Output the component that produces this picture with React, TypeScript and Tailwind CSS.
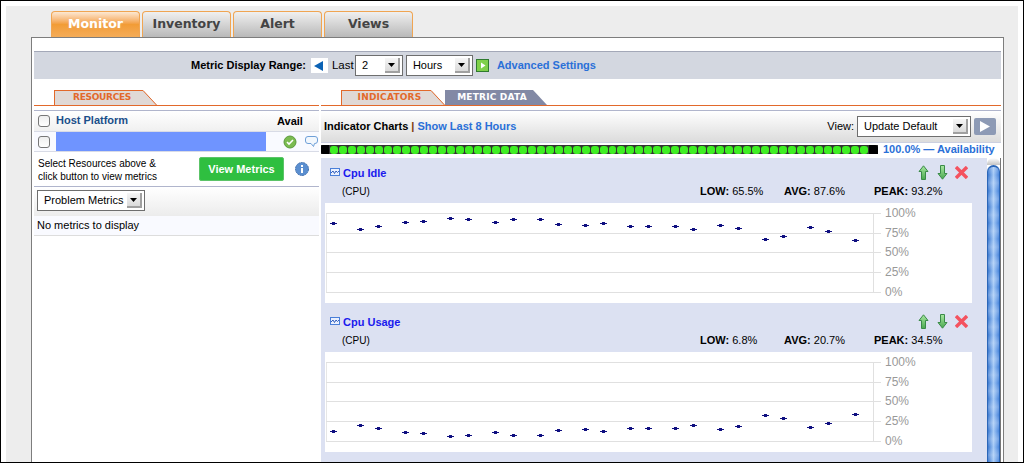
import React from "react";

const xs = [333,360,378,405,423,450,468,495,513,540,558,585,603,630,648,675,693,720,738,765,783,810,828,855];
const idle = [223,229,226,222,221,218,219,222,219,219,224,225,223,226,226,226,229,225,228,239,236,227,231,240];
const usage = [431,425,428,432,433,436,435,432,435,435,430,429,431,428,428,428,425,429,426,415,418,427,423,414];

function Arrow() {
  return (
    <span className="flex h-full w-[15px] shrink-0 items-center justify-center border-r-2 border-b-2 border-[#a0a0a0] bg-gradient-to-b from-[#f6f6f6] to-[#dadada]">
      <svg width="7" height="4" viewBox="0 0 7 4"><path d="M0 0h7L3.5 4z" fill="#000" /></svg>
    </span>
  );
}

function Select({ label, w }: { label: string; w: string }) {
  return (
    <div className={`flex ${w} h-[21px] items-center justify-between border border-[#6e6e6e] bg-white py-[2px] pr-[2px] pl-[6px] text-[11px] whitespace-nowrap text-black`}>
      <span>{label}</span>
      <Arrow />
    </div>
  );
}

function Check() {
  return <span className="block h-[12px] w-[12px] shrink-0 rounded-[3px] border border-[#777] bg-gradient-to-b from-[#eeeeee] to-[#ffffff]" />;
}

function TopTab({ label, active = false }: { label: string; active?: boolean }) {
  return (
    <div
      className={`flex h-[26px] w-[89px] items-center justify-center rounded-t-[4px] border border-b-0 border-[#f0a552] font-["DejaVu_Sans"] text-[12.5px] font-bold ${
        active
          ? "bg-gradient-to-b from-[#fce8d2] via-[#f29c36] to-[#f4ac58] text-white [text-shadow:0_0_2px_#f3b878]"
          : "bg-gradient-to-b from-[#f0f0f0] to-[#b9b9b9] text-[#444]"
      }`}
    >
      {label}
    </div>
  );
}

function SubTab({ label, w, track, dark = false }: { label: string; w: string; track: string; dark?: boolean }) {
  return (
    <div className={`flex h-[15px] ${w} items-center`}>
      <div
        className={`flex h-full flex-1 items-center justify-center pl-[6px] font-["DejaVu_Sans"] text-[9px] font-bold ${track} ${
          dark ? "bg-[#8289a5] text-white" : "border-t border-l border-[#e2692b] bg-[#e0d9d6] text-[#e2692b]"
        }`}
      >
        {label}
      </div>
      <svg width="14" height="15" viewBox="0 0 14 15" className="block shrink-0">
        <path d="M0 0L14 15H0z" fill={dark ? "#8289a5" : "#e0d9d6"} />
        {!dark && <path d="M0 .5L13.5 15" stroke="#e2692b" fill="none" />}
      </svg>
    </div>
  );
}

function ChartIcon() {
  return (
    <svg width="10" height="8" viewBox="0 0 10 8" className="shrink-0">
      <rect x=".5" y=".5" width="9" height="7" fill="#eaf0fe" stroke="#4a7fd8" />
      <path d="M1 5l2-2 1.5 2.5L6 3l1.5 1.5L9 3" stroke="#1f4fb5" fill="none" strokeWidth=".9" />
    </svg>
  );
}

function Controls() {
  return (
    <div className="flex items-center gap-[6px]">
      <svg width="13" height="15" viewBox="0 0 13 15">
        <defs>
          <linearGradient id="ga" x1="0" y1="0" x2="0" y2="1">
            <stop offset="0" stopColor="#a8e8a0" />
            <stop offset="1" stopColor="#4aa850" />
          </linearGradient>
        </defs>
        <path d="M6.5 .8L11 6.5H8.5v8h-4v-8H2z" fill="url(#ga)" stroke="#3a8a48" />
      </svg>
      <svg width="13" height="15" viewBox="0 0 13 15">
        <path d="M6.5 14.2L11 8.5H8.5v-8h-4v8H2z" fill="url(#ga)" stroke="#3a8a48" />
      </svg>
      <svg width="13" height="13" viewBox="0 0 13 13">
        <path d="M2.2 2.2l8.6 8.6M10.8 2.2l-8.6 8.6" stroke="#f4525f" strokeWidth="3.4" strokeLinecap="square" />
      </svg>
    </div>
  );
}

function Stat({ name, value, w }: { name: string; value: string; w: string }) {
  return (
    <span className={`${w} text-black`}>
      <b>{name}:</b> {value}
    </span>
  );
}

function Chart({ ys, top }: { ys: number[]; top: number }) {
  const lines = [10, 30, 49, 69, 89];
  const labels = ["100%", "75%", "50%", "25%", "0%"];
  return (
    <div className="mx-[4px] h-[100px] w-[647px] bg-white">
      <svg width="647" height="100" viewBox="0 0 647 100" className="block">
        <path d="M1.5 10V89" stroke="#e6e6e6" />
        <path d="M548.5 10V89" stroke="#e0e0e0" />
        {lines.map((y, i) => (
          <g key={y}>
            <path d={`M1 ${y + 0.5}H556`} stroke="#e0e0e0" />
            <text x="560" y={y + 4} fontSize="12" fill="#999" fontFamily="Liberation Sans">
              {labels[i]}
            </text>
          </g>
        ))}
        {xs.map((x, i) => (
          <g key={x} fill="#0f0f80">
            <rect x={x - 325 - 3} y={ys[i] - top} width="7" height="1" />
            <rect x={x - 325 - 1} y={ys[i] - top - 1} width="3" height="3" />
          </g>
        ))}
      </svg>
    </div>
  );
}

function Card({
  title, low, avg, peak, ys, top, h,
}: { title: string; low: string; avg: string; peak: string; ys: number[]; top: number; h: string }) {
  return (
    <div>
      <div className={`${h} flex flex-col justify-end pr-[19px] pb-[4px] pl-[9px]`}>
        <div className="flex items-center justify-between">
          <div className="flex items-center gap-[3px] text-[11px] font-bold text-[#1a1aee]">
            <ChartIcon />
            <span className="pt-[2px]">{title}</span>
          </div>
          <Controls />
        </div>
        <div className="mt-[1px] flex items-center text-[11px]">
          <span className="ml-[12px] w-[358px] pt-[1px] text-[10px] text-black">(CPU)</span>
          <Stat name="LOW" value={low} w="w-[84px]" />
          <Stat name="AVG" value={avg} w="w-[90px]" />
          <Stat name="PEAK" value={peak} w="w-[70px]" />
        </div>
      </div>
      <Chart ys={ys} top={top} />
    </div>
  );
}

export default function App() {
  return (
    <div className='h-[463px] w-[1024px] overflow-hidden border border-black bg-white px-[5px] pt-[5px] font-["Liberation_Sans",sans-serif]'>
      <div className="h-[456px] w-[1012px] overflow-hidden bg-[#ededed] pt-[5px] pl-[25px]">
        <div className="flex gap-[2px] pl-[20px]">
          <TopTab label="Monitor" active />
          <TopTab label="Inventory" />
          <TopTab label="Alert" />
          <TopTab label="Views" />
        </div>
        <div className="h-[430px] w-[973px] border border-[#7d7d7d] bg-white px-[2px] pt-[13px]">
          <div className="flex h-[28px] items-center border-t border-[#a3a8b8] bg-[#d3d7e0] pl-[157px] text-[11px] text-black">
            <b>Metric Display Range:</b>
            <span className="ml-[5px] flex h-[15px] w-[17px] items-center justify-center bg-white">
              <svg width="10" height="10" viewBox="0 0 10 10"><path d="M0 5L9 0v10z" fill="#0b62b5" /></svg>
            </span>
            <span className="ml-[4px] w-[23px] text-[11.5px]">Last</span>
            <span className="w-[48px]"><Select label="2" w="w-[48px]" /></span>
            <span className="ml-[3px]"><Select label="Hours" w="w-[67px]" /></span>
            <span className="ml-[3px]">
              <svg width="13" height="13" viewBox="0 0 13 13" className="block">
                <rect x=".5" y=".5" width="12" height="12" fill="#7fd04a" stroke="#2f7a2f" />
                <path d="M5 3.5L9.5 6.5 5 9.5z" fill="#fff" />
              </svg>
            </span>
            <b className="ml-[8px] text-[#2a70d8]">Advanced Settings</b>
          </div>
          <div className="flex gap-[2px] pt-[12px]">
            <div className="w-[285px]">
              <div className="flex h-[15px] items-end border-b border-[#e2692b] pl-[20px]">
                <SubTab label="RESOURCES" w="w-[103px]" track="tracking-[-0.3px]" />
              </div>
              <div className="mt-[4px] border-t border-[#b0b5cc]">
                <div className="flex h-[20px] items-center bg-gradient-to-b from-[#fff] to-[#f0f0f0] pl-[4px] text-[11px]">
                  <Check />
                  <b className="ml-[6px] w-[221px] pb-[2px] text-[#1a4f8a]">Host Platform</b>
                  <b className="text-black">Avail</b>
                </div>
                <div className="flex h-[21px] items-center border-y border-[#d8dbe6] bg-[#f9faff] pl-[4px]">
                  <Check />
                  <span className="ml-[6px] h-[19px] w-[210px] bg-[#6f94ff]" />
                  <svg width="14" height="14" viewBox="0 0 14 14" className="ml-[17px]">
                    <circle cx="7" cy="7" r="6" fill="#7bbb50" stroke="#5a9a3c" />
                    <path d="M4 7l2 2 4-4" stroke="#fff" strokeWidth="1.6" fill="none" />
                  </svg>
                  <svg width="13" height="12" viewBox="0 0 13 12" className="ml-[8px]">
                    <path d="M3 .5h7a2.5 2.5 0 012.5 2.5v2A2.5 2.5 0 0110 7.5H9.5l-1 3-2.5-3H3A2.5 2.5 0 01.5 5V3A2.5 2.5 0 013 .5z" fill="#f2f7fd" stroke="#6fa0d8" />
                  </svg>
                </div>
                <div className="flex h-[35px] items-center border-b border-[#b0b5cc] pl-[4px] text-[10px] leading-[13px] text-black">
                  <span className="w-[161px] pt-[2px]">Select Resources above &amp;<br />click button to view metrics</span>
                  <span className="flex h-[24px] w-[85px] items-center justify-center rounded-[2px] border border-[#5cc468] bg-[#2fbf40] text-[11px] font-bold text-white">View Metrics</span>
                  <svg width="14" height="14" viewBox="0 0 14 14" className="ml-[11px]">
                    <circle cx="7" cy="7" r="6.5" fill="#5b8fd0" stroke="#3f6fae" strokeDasharray="2 .6" />
                    <rect x="6" y="6" width="2" height="5" fill="#fff" />
                    <rect x="6" y="3" width="2" height="2" fill="#fff" />
                  </svg>
                </div>
                <div className="flex h-[29px] items-center bg-gradient-to-b from-[#fff] to-[#ececec] pb-[2px] pl-[3px]">
                  <Select label="Problem Metrics" w="w-[108px]" />
                </div>
                <div className="flex h-[20px] items-center border-b border-[#dddddd] bg-[#f9faff] pl-[3px] text-[11px] text-black">
                  No metrics to display
                </div>
              </div>
            </div>
            <div className="w-[680px]">
              <div className="flex h-[15px] items-end border-b border-[#e2692b] pl-[20px]">
                <SubTab label="INDICATORS" w="w-[104px]" track="tracking-[0.2px]" />
                <SubTab label="METRIC DATA" w="w-[102px]" track="tracking-[0.2px]" dark />
              </div>
              <div className="mt-[4px] border-t border-[#b0b5cc]">
                <div className="flex h-[31px] items-center bg-gradient-to-b from-[#fff] to-[#dcdcdc] pl-[3px] text-[11px]">
                  <b className="text-black">Indicator Charts</b>
                  <b className="mx-[3px] text-[#7a3a10]">|</b>
                  <b className="text-[#2a70d8]">Show Last 8 Hours</b>
                  <span className="ml-auto text-black">View:</span>
                  <span className="ml-[3px]"><Select label="Update Default" w="w-[114px]" /></span>
                  <span className="mr-[5px] ml-[3px] flex h-[17px] w-[22px] items-center justify-center rounded-[2px] bg-[#8d9ab5]">
                    <svg width="10" height="11" viewBox="0 0 10 11"><path d="M0 0l10 5.5L0 11z" fill="#fff" /></svg>
                  </span>
                </div>
                <div className="flex h-[16px] items-start border-t border-[#ccd0e0] text-[11px]">
                  <div className="mt-[2px] flex h-[9px] w-[557px] items-center bg-[#333]">
                    <span className="mr-[1px] block h-[9px] w-[8px] rounded-l-[2px] bg-black" />
                    {Array.from({ length: 60 }).map((_, i) => (
                      <span key={i} className="mr-[1px] block h-[8px] w-[8px] rounded-[3px] bg-[#3fee24]" />
                    ))}
                    <span className="ml-auto block h-[9px] w-[9px] rounded-tr-[3px] bg-black" />
                  </div>
                  <b className="ml-[5px] -mt-[2px] whitespace-nowrap text-[#2a70d8]">100.0% — Availability</b>
                </div>
                <div className="flex">
                  <div className="w-[666px] bg-[#dce1f2]">
                    <Card title="Cpu Idle" low="65.5%" avg="87.6%" peak="93.2%" ys={idle} top={203} h="h-[45px]" />
                    <Card title="Cpu Usage" low="6.8%" avg="20.7%" peak="34.5%" ys={usage} top={352} h="h-[49px]" />
                    <div className="h-[12px]" />
                  </div>
                  <div className="flex w-[14px] flex-col border-r border-[#777] bg-white">
                    <div className="h-[7px] rounded-t-[6px] bg-gradient-to-b from-white to-[#c4c4c4]" />
                    <div className="h-[300px] rounded-t-[7px] border-x border-t-2 border-[#2a66b8] bg-[repeating-linear-gradient(180deg,rgba(255,255,255,0.22)_0px,rgba(255,255,255,0)_8px,rgba(255,255,255,0.22)_16px),linear-gradient(90deg,#3a78d0,#a4c9f6_50%,#4a86dc)]" />
                  </div>
                </div>
              </div>
            </div>
          </div>
        </div>
      </div>
    </div>
  );
}
